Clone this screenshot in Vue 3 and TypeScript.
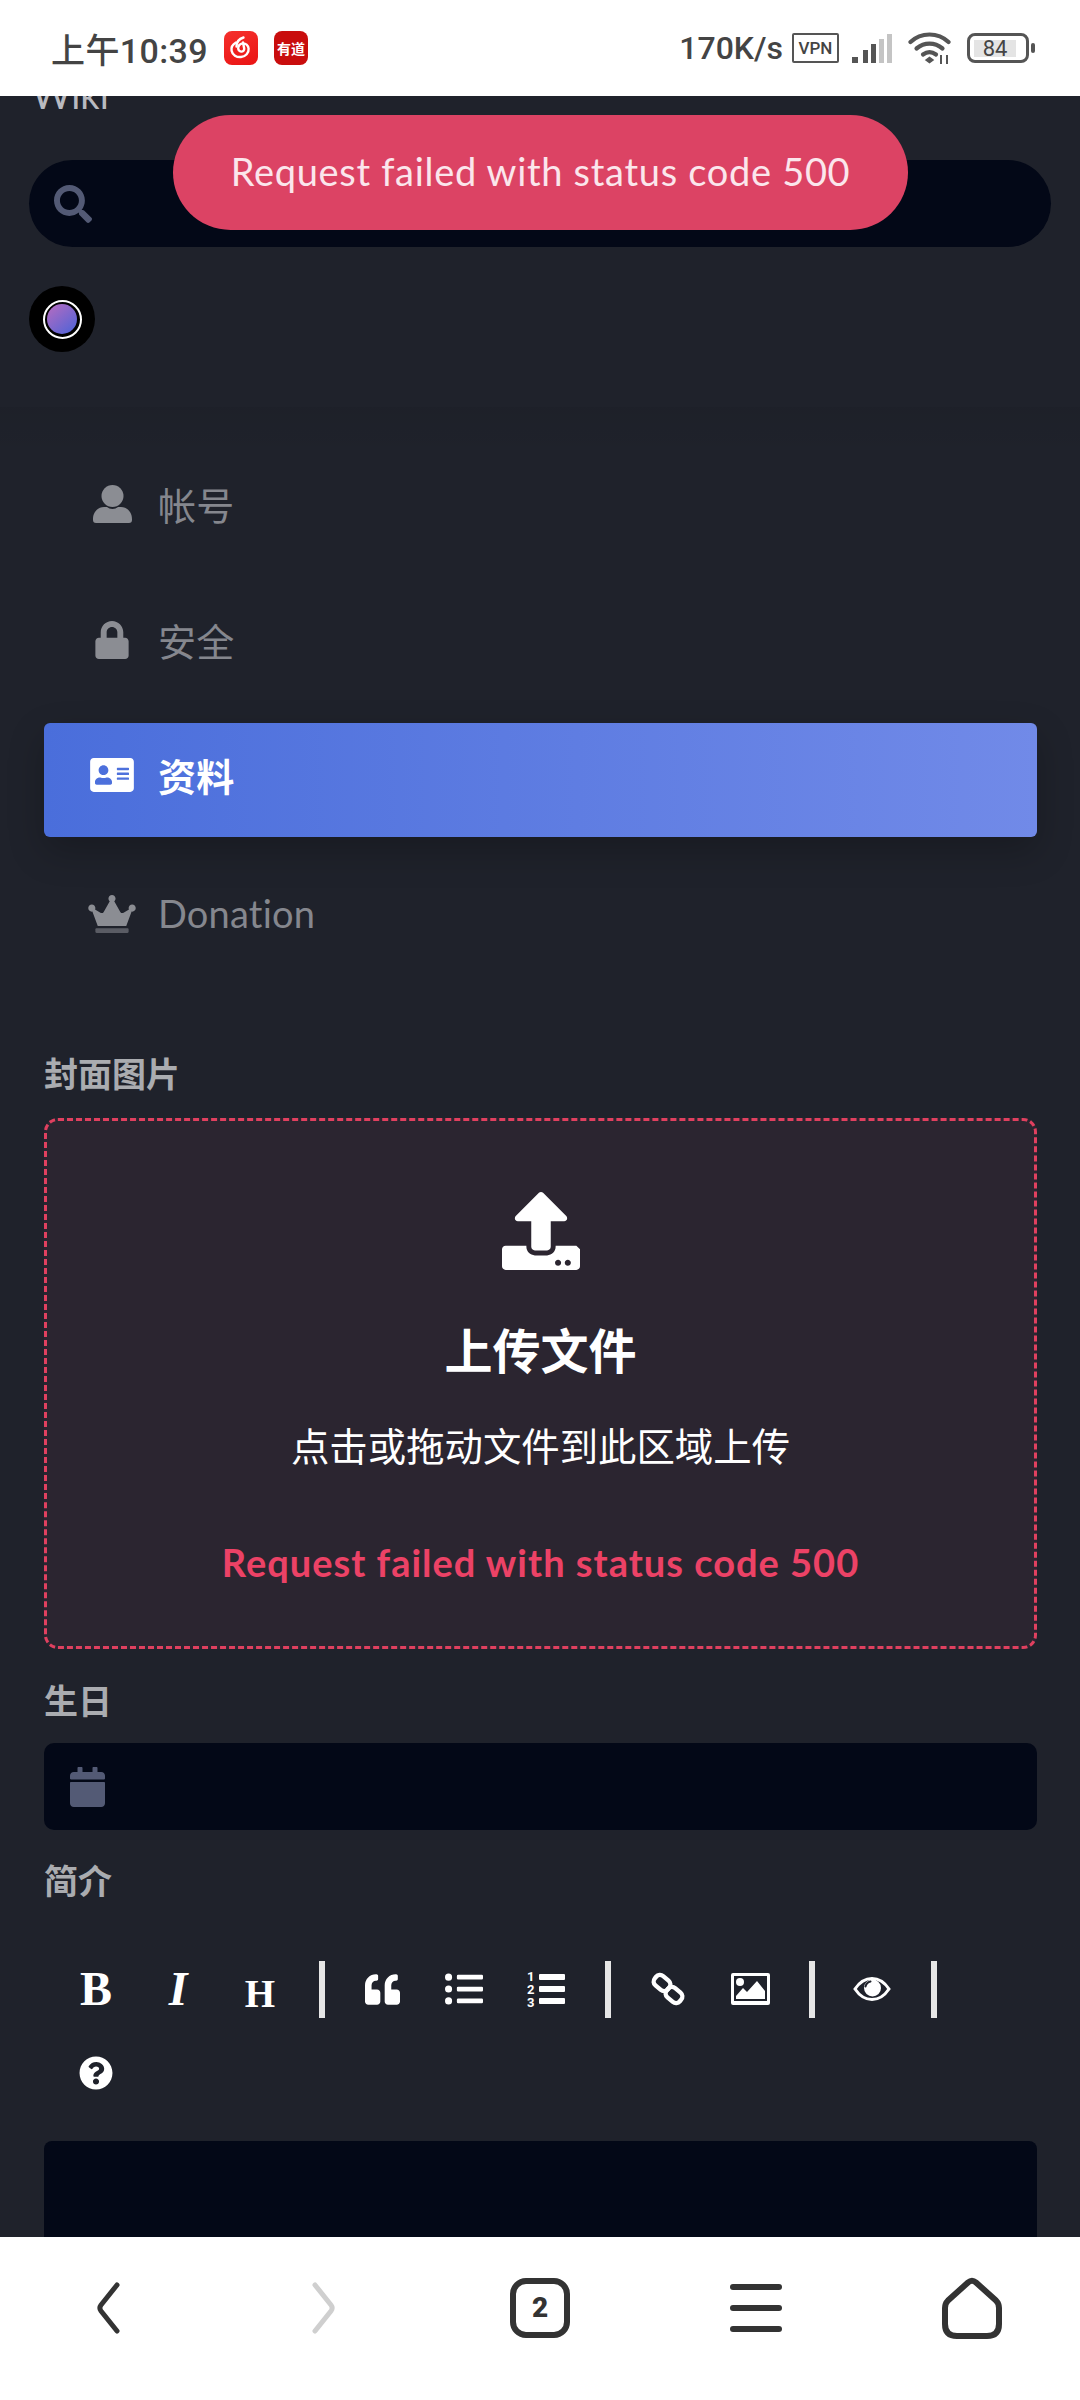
<script setup lang="ts">
interface NavItem {
  label: string;
  icon: string;
  active?: boolean;
}

const navItems: NavItem[] = [
  { label: '帐号', icon: 'user' },
  { label: '安全', icon: 'lock' },
  { label: '资料', icon: 'card', active: true },
  { label: 'Donation', icon: 'crown' },
];

const errorText = 'Request failed with status code 500';
</script>

<template>
  <div class="screen">
    <header class="status-bar">
      <div class="status-left">
        <span class="time">上午10:39</span>
        <span class="app-icon netease">
          <svg viewBox="0 0 34 34" width="34" height="34" fill="none" stroke="#fff" stroke-width="2.400" stroke-linecap="round">
            <path d="M19.500 6.500c-5 1.500-7 5-7 9" />
            <path d="M12 11.500c-3.500 2-5 5-4.400 8.200.8 4.300 5 6.800 9.400 6.300 4.600-.5 8-4.200 7.600-8.400-.3-3.200-3-5.600-6-5.200-2.700.3-4.700 2.600-4.400 5.200.2 1.900 1.900 3.200 3.600 3 1.600-.2 2.600-1.600 2.400-3.100L19 11.500" />
          </svg>
        </span>
        <span class="app-icon youdao">有道</span>
      </div>
      <div class="status-right">
        <span class="speed">170K/s</span>
        <span class="vpn">VPN</span>
        <svg class="signal" viewBox="0 0 40 29" width="40" height="29">
          <rect x="0" y="23" width="6" height="6" fill="#555" />
          <rect x="11" y="16" width="5" height="13" fill="#555" />
          <rect x="19" y="10" width="5" height="19" fill="#555" />
          <rect x="27" y="5" width="5" height="24" fill="#c4c4c4" />
          <rect x="35" y="0" width="5" height="29" fill="#c4c4c4" />
        </svg>
        <svg class="wifi" viewBox="0 0 44 32" width="44" height="32" fill="none" stroke="#555" stroke-width="4.200" stroke-linecap="round">
          <path d="M2.500 10C13 0 30 0 40.500 10" />
          <path d="M8.500 16.500c8-6.500 18-6.500 26 0" />
          <path d="M15 22.500c4-3 9-3 13 0" />
          <path d="M18 28l3.500-2.500 3.500 2.500-3.500 2.500z" fill="#555" stroke-width="1.500" />
          <path d="M33 23v9M39 23v9" stroke-width="2" stroke-linecap="butt" />
        </svg>
        <span class="battery">
          <span class="battery-body"><span class="battery-level">84</span></span>
          <span class="battery-nub"></span>
        </span>
      </div>
    </header>

    <main class="viewport">
      <div class="toast">{{ errorText }}</div>

      <div class="page">
        <div class="wiki">Wiki</div>

        <div class="search">
          <svg viewBox="0 0 512 512" width="38" height="38" fill="#535a75">
            <path d="M505 442.700L405.300 343c-4.500-4.500-10.600-7-17-7H372c27.600-35.300 44-79.700 44-128C416 93.100 322.900 0 208 0S0 93.100 0 208s93.100 208 208 208c48.300 0 92.700-16.400 128-44v16.300c0 6.400 2.500 12.500 7 17l99.700 99.700c9.400 9.400 24.600 9.400 33.900 0l28.300-28.300c9.400-9.400 9.400-24.600.1-34zM208 336c-70.700 0-128-57.200-128-128 0-70.700 57.200-128 128-128 70.700 0 128 57.200 128 128 0 70.700-57.200 128-128 128z" />
          </svg>
        </div>

        <div class="avatar">
          <span class="avatar-ring"><span class="avatar-inner"></span></span>
        </div>

        <nav class="side-nav">
          <div v-for="item in navItems" :key="item.label" class="nav-row" :class="{ active: item.active }">
            <span class="nav-icon">
              <svg v-if="item.icon === 'user'" viewBox="0 0 39 38" width="39" height="38" fill="currentColor">
                <circle cx="19.500" cy="11" r="11" />
                <path d="M0 34c0-7 5-12 11-12h3c1.500 1.200 3.300 2 5.500 2s4-.8 5.500-2h3c6 0 11 5 11 12v1a3 3 0 0 1-3 3H3a3 3 0 0 1-3-3z" />
              </svg>
              <svg v-else-if="item.icon === 'lock'" viewBox="0 0 448 512" width="34" height="38" fill="currentColor">
                <path d="M400 224h-24v-72C376 68.200 307.800 0 224 0S72 68.200 72 152v72H48c-26.500 0-48 21.500-48 48v192c0 26.500 21.500 48 48 48h352c26.500 0 48-21.500 48-48V272c0-26.500-21.500-48-48-48zm-104 0H152v-72c0-39.700 32.300-72 72-72s72 32.300 72 72v72z" />
              </svg>
              <svg v-else-if="item.icon === 'card'" viewBox="0 32 576 448" width="44" height="34" fill="currentColor">
                <path d="M528 32H48C21.500 32 0 53.500 0 80v352c0 26.500 21.500 48 48 48h480c26.500 0 48-21.500 48-48V80c0-26.500-21.500-48-48-48zm-352 96c35.300 0 64 28.700 64 64s-28.700 64-64 64-64-28.700-64-64 28.700-64 64-64zm112 236.800c0 10.600-10 19.200-22.400 19.200H86.400C74 384 64 375.400 64 364.800v-19.200c0-31.800 30.100-57.600 67.200-57.600h5c12.300 5.100 25.700 8 39.800 8s27.600-2.900 39.800-8h5c37.100 0 67.200 25.800 67.200 57.600v19.200zM512 312c0 4.400-3.600 8-8 8H360c-4.400 0-8-3.600-8-8v-16c0-4.400 3.600-8 8-8h144c4.400 0 8 3.600 8 8v16zm0-64c0 4.400-3.600 8-8 8H360c-4.400 0-8-3.600-8-8v-16c0-4.400 3.600-8 8-8h144c4.400 0 8 3.600 8 8v16zm0-64c0 4.400-3.600 8-8 8H360c-4.400 0-8-3.600-8-8v-16c0-4.400 3.600-8 8-8h144c4.400 0 8 3.600 8 8v16z" />
              </svg>
              <svg v-else viewBox="0 0 640 512" width="48" height="38" fill="currentColor">
                <path opacity="0.55" d="M528 448H112c-8.800 0-16 7.200-16 16v32c0 8.800 7.200 16 16 16h416c8.800 0 16-7.200 16-16v-32c0-8.800-7.200-16-16-16z" />
                <path d="M592 128c-26.500 0-48 21.500-48 48 0 7.100 1.600 13.700 4.400 19.800L476 239.200c-15.400 9.200-35.300 4-44.200-11.600L350.300 85C361 76.200 368 63 368 48c0-26.500-21.500-48-48-48s-48 21.500-48 48c0 15 7 28.200 17.700 37l-81.500 142.600c-8.900 15.600-28.900 20.800-44.200 11.600l-72.300-43.400c2.700-6 4.400-12.700 4.400-19.800 0-26.500-21.500-48-48-48S0 149.500 0 176s21.500 48 48 48c2.600 0 5.200-.4 7.700-.8L128 416h384l72.300-192.800c2.500.4 5.100.8 7.700.8 26.500 0 48-21.500 48-48s-21.500-48-48-48z" />
              </svg>
            </span>
            <span class="nav-label">{{ item.label }}</span>
          </div>
        </nav>

        <label class="field-label cover-label">封面图片</label>
        <div class="dropzone">
          <svg viewBox="0 0 512 512" width="78" height="78" fill="#fff">
            <path d="M296 384h-80c-13.300 0-24-10.700-24-24V192h-87.700c-17.800 0-26.700-21.500-14.100-34.100L242.300 5.700c7.500-7.500 19.800-7.500 27.300 0l152.200 152.200c12.600 12.600 3.700 34.100-14.100 34.100H320v168c0 13.300-10.700 24-24 24zm216-8v112c0 13.300-10.700 24-24 24H24c-13.300 0-24-10.700-24-24V376c0-13.300 10.700-24 24-24h136v8c0 30.900 25.100 56 56 56h80c30.900 0 56-25.100 56-56v-8h136zm-124 88c0-11-9-20-20-20s-20 9-20 20 9 20 20 20 20-9 20-20zm64 0c0-11-9-20-20-20s-20 9-20 20 9 20 20 20 20-9 20-20z" />
          </svg>
          <div class="drop-title">上传文件</div>
          <div class="drop-hint">点击或拖动文件到此区域上传</div>
          <div class="drop-error">{{ errorText }}</div>
        </div>

        <label class="field-label birthday-label">生日</label>
        <div class="date-input">
          <svg viewBox="0 0 448 512" width="35" height="40" fill="#535a75">
            <path d="M12 192h424c6.600 0 12 5.400 12 12v260c0 26.500-21.500 48-48 48H48c-26.500 0-48-21.500-48-48V204c0-6.600 5.400-12 12-12zm436-44v-36c0-26.500-21.500-48-48-48h-48V12c0-6.600-5.400-12-12-12h-40c-6.600 0-12 5.400-12 12v52H160V12c0-6.600-5.400-12-12-12h-40c-6.600 0-12 5.400-12 12v52H48C21.500 64 0 85.500 0 112v36c0 6.600 5.400 12 12 12h424c6.600 0 12-5.400 12-12z" />
          </svg>
        </div>

        <label class="field-label bio-label">简介</label>
        <div class="toolbar">
          <span class="tool glyph-b">B</span>
          <span class="tool glyph-i">I</span>
          <span class="tool glyph-h">H</span>
          <i class="sep"></i>
          <span class="tool">
            <svg viewBox="0 0 512 512" width="35" height="35" fill="#fff">
              <path d="M464 256h-80v-64c0-35.300 28.700-64 64-64h8c13.300 0 24-10.700 24-24V56c0-13.300-10.700-24-24-24h-8c-88.400 0-160 71.600-160 160v240c0 26.500 21.500 48 48 48h128c26.500 0 48-21.500 48-48V304c0-26.500-21.500-48-48-48zm-288 0H96v-64c0-35.300 28.700-64 64-64h8c13.300 0 24-10.700 24-24V56c0-13.300-10.700-24-24-24h-8C71.600 32 0 103.600 0 192v240c0 26.500 21.500 48 48 48h128c26.500 0 48-21.500 48-48V304c0-26.500-21.500-48-48-48z" />
            </svg>
          </span>
          <span class="tool">
            <svg viewBox="0 0 512 512" width="38" height="38" fill="#fff">
              <path d="M48 48a48 48 0 1 0 48 48 48 48 0 0 0-48-48zm0 160a48 48 0 1 0 48 48 48 48 0 0 0-48-48zm0 160a48 48 0 1 0 48 48 48 48 0 0 0-48-48zm448 16H176a16 16 0 0 0-16 16v32a16 16 0 0 0 16 16h320a16 16 0 0 0 16-16v-32a16 16 0 0 0-16-16zm0-320H176a16 16 0 0 0-16 16v32a16 16 0 0 0 16 16h320a16 16 0 0 0 16-16V80a16 16 0 0 0-16-16zm0 160H176a16 16 0 0 0-16 16v32a16 16 0 0 0 16 16h320a16 16 0 0 0 16-16v-32a16 16 0 0 0-16-16z" />
            </svg>
          </span>
          <span class="tool">
            <svg viewBox="0 0 38 38" width="38" height="38" fill="#fff">
              <rect x="12" y="4" width="26" height="6" rx="1" />
              <rect x="12" y="16" width="26" height="6" rx="1" />
              <rect x="12" y="28" width="26" height="6" rx="1" />
              <text x="0" y="11" class="list-num">1</text>
              <text x="0" y="24" class="list-num">2</text>
              <text x="0" y="37" class="list-num">3</text>
            </svg>
          </span>
          <i class="sep"></i>
          <span class="tool">
            <svg viewBox="0 0 34 34" width="34" height="34" fill="none" stroke="#fff" stroke-width="4.400">
              <rect x="2.500" y="5" width="17" height="12" rx="5" transform="rotate(40 11 11)" />
              <rect x="14.500" y="17" width="17" height="12" rx="5" transform="rotate(40 23 23)" />
            </svg>
          </span>
          <span class="tool">
            <svg viewBox="0 0 39 32" width="39" height="32" fill="#fff">
              <path fill-rule="evenodd" d="M2 0h35a2 2 0 0 1 2 2v28a2 2 0 0 1-2 2H2a2 2 0 0 1-2-2V2a2 2 0 0 1 2-2zm1 3v25h33V3z" />
              <circle cx="9" cy="9" r="4" />
              <path d="M5 26v-3l7-8 4 4 10-11 8 10v8z" />
            </svg>
          </span>
          <i class="sep"></i>
          <span class="tool">
            <svg viewBox="0 0 38 24" width="38" height="24">
              <path d="M2 12C7 4.500 12.500 1.500 19 1.500S31 4.500 36 12C31 19.500 25.500 22.500 19 22.500S7 19.500 2 12Z" fill="none" stroke="#fff" stroke-width="3" />
              <circle cx="19.500" cy="11" r="8.500" fill="#fff" />
              <path d="M17.500 4.500a6.500 6.500 0 0 0-5 5" fill="none" stroke="#1f222b" stroke-width="2" stroke-linecap="round" />
            </svg>
          </span>
          <i class="sep"></i>
          <span class="tool">
            <svg viewBox="0 0 512 512" width="34" height="34" fill="#fff">
              <path d="M504 256c0 136.997-111.043 248-248 248S8 392.997 8 256C8 119.083 119.043 8 256 8s248 111.083 248 248zM262.655 90c-54.497 0-89.255 22.957-116.549 63.758-3.536 5.286-2.353 12.415 2.715 16.258l34.699 26.310c5.205 3.947 12.621 3.008 16.665-2.122 17.864-22.658 30.113-35.797 57.303-35.797 20.429 0 45.698 13.148 45.698 32.958 0 14.976-12.363 22.667-32.534 33.976C247.128 238.528 216 254.941 216 296v4c0 6.627 5.373 12 12 12h56c6.627 0 12-5.373 12-12v-1.333c0-28.462 83.186-29.647 83.186-106.667 0-58.002-60.165-102-116.531-102zM256 338c-25.365 0-46 20.635-46 46 0 25.364 20.635 46 46 46s46-20.636 46-46c0-25.365-20.635-46-46-46z" />
            </svg>
          </span>
        </div>
        <div class="editor"></div>
      </div>
    </main>

    <footer class="bottom-bar">
      <span class="bottom-item">
        <svg viewBox="0 0 26 52" width="26" height="52" fill="none" stroke="#333" stroke-width="5" stroke-linecap="round" stroke-linejoin="round">
          <path d="M22 3L6 23c-1.500 2-1.500 4 0 6l16 20" />
        </svg>
      </span>
      <span class="bottom-item">
        <svg viewBox="0 0 26 52" width="26" height="52" fill="none" stroke="#cfcfcf" stroke-width="5" stroke-linecap="round" stroke-linejoin="round">
          <path d="M4 3l16 20c1.500 2 1.500 4 0 6L4 49" />
        </svg>
      </span>
      <span class="bottom-item">
        <span class="tabs-count">2</span>
      </span>
      <span class="bottom-item">
        <span class="menu-lines"><i></i><i></i><i></i></span>
      </span>
      <span class="bottom-item">
        <svg viewBox="0 0 60 62" width="60" height="62" fill="none" stroke="#333" stroke-width="6" stroke-linejoin="round">
          <path d="M26 5.500L6 23.500Q3 26.500 3 31V47Q3 59 15 59H45Q57 59 57 47V31Q57 26.500 54 23.500L34 5.500Q30 2 26 5.500Z" />
        </svg>
      </span>
    </footer>
  </div>
</template>

<style scoped>
.screen {
  display: flex;
  flex-direction: column;
  width: 1080px;
  height: 2400px;
  overflow: hidden;
  background: #1f222b;
  font-family: "Lato", "Noto Sans CJK SC", sans-serif;
}

.status-bar {
  flex: none;
  display: flex;
  align-items: center;
  justify-content: space-between;
  height: 96px;
  padding: 0 45px 0 51px;
  box-sizing: border-box;
  background: #fff;
  color: #444;
}

.status-left,
.status-right {
  display: flex;
  align-items: center;
}

.time {
  width: 173px;
  font-family: "Roboto", "Noto Sans CJK SC", sans-serif;
  font-size: 34px;
  font-weight: 500;
  letter-spacing: 0.4px;
}

.app-icon {
  display: flex;
  align-items: center;
  justify-content: center;
  width: 34px;
  height: 34px;
  border-radius: 8px;
  margin-right: 16px;
}

.netease {
  background: linear-gradient(160deg, #f5302c, #ea1414);
}

.youdao {
  background: #c90d0d;
  color: #fff;
  font-size: 14px;
  font-weight: 700;
}

.speed {
  font-family: "Roboto", "Noto Sans", sans-serif;
  font-size: 32px;
  font-weight: 500;
  margin-right: 9px;
}

.vpn {
  width: 47px;
  height: 30px;
  box-sizing: border-box;
  border: 2px solid #555;
  border-radius: 2px;
  font-family: "Roboto", sans-serif;
  font-size: 17px;
  font-weight: 500;
  line-height: 26px;
  text-align: center;
  margin-right: 13px;
}

.signal {
  margin-right: 16px;
}

.wifi {
  margin-right: 15px;
}

.battery {
  display: flex;
  align-items: center;
  gap: 2px;
}

.battery-body {
  display: flex;
  align-items: center;
  width: 62px;
  height: 30px;
  padding: 3px;
  box-sizing: border-box;
  border: 3.500px solid #555;
  border-radius: 8px;
}

.battery-level {
  width: 42px;
  height: 17px;
  margin-left: 1px;
  background: #e4e4e4;
  font-family: "Roboto", sans-serif;
  font-size: 22px;
  line-height: 17px;
  text-align: center;
  color: #444;
}

.battery-nub {
  width: 4px;
  height: 10px;
  border-radius: 2px;
  background: #555;
}

.viewport {
  position: relative;
  flex: 1;
  min-height: 0;
  overflow: hidden;
}

.toast {
  position: absolute;
  z-index: 2;
  top: 19px;
  left: 173px;
  width: 735px;
  height: 115px;
  border-radius: 58px;
  background: #dc4364;
  color: #fbe6ec;
  font-size: 38px;
  letter-spacing: 0.7px;
  line-height: 113px;
  text-align: center;
}

.page {
  display: flex;
  flex-direction: column;
  margin-top: -24px;
  padding: 0 43px 0 44px;
}

.wiki {
  height: 44px;
  margin-left: -12px;
  color: #b9bac0;
  font-size: 38px;
  line-height: 44px;
}

.search {
  display: flex;
  align-items: center;
  height: 87px;
  margin: 44px -14px 0 -15px;
  padding-left: 25px;
  border-radius: 44px;
  background: #030817;
}

.avatar {
  display: flex;
  align-items: center;
  justify-content: center;
  width: 66px;
  height: 66px;
  margin: 39px 0 0 -15px;
  border-radius: 50%;
  background: #000;
}

.avatar-ring {
  display: flex;
  align-items: center;
  justify-content: center;
  width: 39px;
  height: 39px;
  box-sizing: border-box;
  border: 2px solid #fff;
  border-radius: 50%;
}

.avatar-inner {
  width: 30px;
  height: 30px;
  border-radius: 50%;
  background: linear-gradient(140deg, #b96cc0, #4a63d8);
}

.side-nav {
  display: flex;
  flex-direction: column;
  gap: 22px;
  margin: 55px -43px 0 -44px;
  padding: 41px 43px 0 44px;
  background: linear-gradient(rgba(0, 0, 0, 0.05), rgba(0, 0, 0, 0) 50px);
}

.nav-row {
  display: flex;
  align-items: center;
  gap: 18px;
  height: 114px;
  padding: 0 0 4px 40px;
  box-sizing: border-box;
  border-radius: 6px;
  color: #85878e;
  font-size: 38px;
  letter-spacing: 0.2px;
}

.nav-row:last-child {
  padding-bottom: 1px;
}

.nav-row.active {
  margin: 3px 0 -3px;
  padding-bottom: 12px;
  background: linear-gradient(90deg, #4a6edb, #718ae8);
  box-shadow: 0 14px 36px rgba(0, 0, 0, 0.22);
  color: #fff;
  font-weight: 700;
}

.nav-icon {
  display: flex;
  align-items: center;
  justify-content: center;
  width: 56px;
  padding-top: 2px;
}

.nav-row:not(.active) .nav-icon {
  color: #8b8d93;
}

.field-label {
  display: block;
  height: 40px;
  color: #aaacb0;
  font-size: 34px;
  font-weight: 700;
  line-height: 40px;
}

.cover-label {
  margin-top: 84px;
}

.dropzone {
  display: flex;
  flex-direction: column;
  align-items: center;
  height: 531px;
  margin-top: 24px;
  padding-top: 71px;
  box-sizing: border-box;
  border: 3px dashed #e0405f;
  border-radius: 14px;
  background: #2b2530;
}

.drop-title {
  margin-top: 51px;
  color: #fff;
  font-size: 48px;
  font-weight: 700;
  line-height: 60px;
}

.drop-hint {
  margin-top: 40px;
  color: #fff;
  font-size: 38.400px;
  line-height: 50px;
}

.drop-error {
  margin-top: 66px;
  color: #ec4266;
  font-size: 38px;
  font-weight: 700;
  letter-spacing: 1px;
  line-height: 50px;
}

.birthday-label {
  margin-top: 32px;
}

.date-input {
  display: flex;
  align-items: center;
  height: 87px;
  margin-top: 22px;
  padding-left: 26px;
  border-radius: 10px;
  background: #030817;
}

.bio-label {
  margin-top: 31px;
}

.toolbar {
  display: flex;
  flex-wrap: wrap;
  align-items: center;
  margin-top: 46px;
  padding: 0 10px 0 11px;
}

.tool {
  display: flex;
  align-items: center;
  justify-content: center;
  width: 82px;
  height: 84px;
  color: #fff;
  font-family: "Liberation Serif", serif;
  line-height: 1;
}

.glyph-b {
  font-size: 48px;
  font-weight: 700;
}

.glyph-i {
  font-size: 48px;
  font-style: italic;
  font-weight: 700;
}

.glyph-h {
  font-size: 39px;
  font-weight: 700;
  padding-top: 8px;
  box-sizing: border-box;
}

.sep {
  width: 6px;
  height: 57px;
  margin: 0 16px 0 18px;
  background: #e6e6e6;
}

.list-num {
  font-family: "Roboto", sans-serif;
  font-size: 13px;
  font-weight: 700;
}

.editor {
  height: 120px;
  margin-top: 26px;
  border-radius: 8px 8px 0 0;
  background: #030817;
}

.bottom-bar {
  flex: none;
  display: grid;
  grid-template-columns: repeat(5, 1fr);
  align-items: center;
  height: 163px;
  padding-bottom: 22px;
  box-sizing: border-box;
  background: #fff;
}

.bottom-item {
  display: flex;
  align-items: center;
  justify-content: center;
}

.tabs-count {
  width: 60px;
  height: 60px;
  box-sizing: border-box;
  border: 6px solid #333;
  border-radius: 16px;
  color: #333;
  font-family: "Roboto", sans-serif;
  font-size: 28px;
  font-weight: 900;
  line-height: 48px;
  text-align: center;
}

.menu-lines {
  display: flex;
  flex-direction: column;
  gap: 15px;
  width: 52px;
}

.menu-lines i {
  height: 6px;
  border-radius: 3px;
  background: #333;
}
</style>

<style>
html,
body {
  margin: 0;
  background: #1f222b;
}
</style>
